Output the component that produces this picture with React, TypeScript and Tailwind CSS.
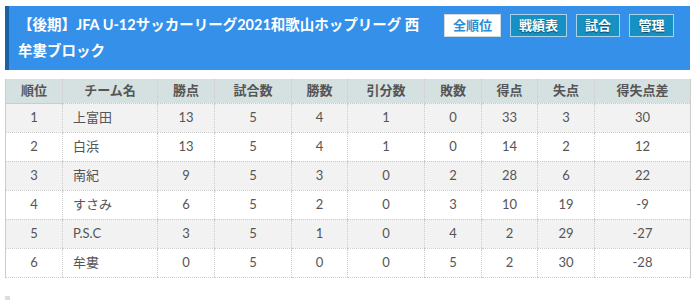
const rows = [
  { rank: 1, team: '上富田', pts: 13, played: 5, win: 4, draw: 1, lose: 0, gf: 33, ga: 3, diff: 30 },
  { rank: 2, team: '白浜', pts: 13, played: 5, win: 4, draw: 1, lose: 0, gf: 14, ga: 2, diff: 12 },
  { rank: 3, team: '南紀', pts: 9, played: 5, win: 3, draw: 0, lose: 2, gf: 28, ga: 6, diff: 22 },
  { rank: 4, team: 'すさみ', pts: 6, played: 5, win: 2, draw: 0, lose: 3, gf: 10, ga: 19, diff: -9 },
  { rank: 5, team: 'P.S.C', pts: 3, played: 5, win: 1, draw: 0, lose: 4, gf: 2, ga: 29, diff: -27 },
  { rank: 6, team: '牟婁', pts: 0, played: 5, win: 0, draw: 0, lose: 5, gf: 2, ga: 30, diff: -28 },
];

const headers = ['順位', 'チーム名', '勝点', '試合数', '勝数', '引分数', '敗数', '得点', '失点', '得失点差'];
const widths = [57, 95, 57, 77, 56, 77, 57, 56, 57, 96];

export default function App() {
  return (
    <div className="min-h-screen bg-white text-[#555] font-['Lato','Noto_Sans_CJK_JP',sans-serif]">
      <div className="ml-[5px] w-[685px] pt-[6px]">
        {/* title bar */}
        <div className="flex items-start h-[64px] bg-[#3590ea] border-l-4 border-[#1b5fa5] pl-[9px] pr-[16px] pt-[6px]">
          <h1 className="w-[404px] text-white font-bold text-[14.5px] leading-[26px]">
            【後期】JFA U-12サッカーリーグ2021和歌山ホップリーグ 西牟婁ブロック
          </h1>
          <div className="ml-auto flex gap-[9px] pt-[2px]">
            <button className="h-[23px] w-[57px] bg-white border border-[#cfd8dc] text-[#2a8ed2] text-[13px] font-bold">
              全順位
            </button>
            <button className="h-[23px] w-[57px] bg-[#1591c3] border border-[#a9d3ea] text-white text-[13px] font-bold [text-shadow:0_1px_1px_rgba(0,0,0,0.5)]">
              戦績表
            </button>
            <button className="h-[23px] w-[44px] bg-[#1591c3] border border-[#a9d3ea] text-white text-[13px] font-bold [text-shadow:0_1px_1px_rgba(0,0,0,0.5)]">
              試合
            </button>
            <button className="h-[23px] w-[45px] bg-[#1591c3] border border-[#a9d3ea] text-white text-[13px] font-bold [text-shadow:0_1px_1px_rgba(0,0,0,0.5)]">
              管理
            </button>
          </div>
        </div>

        {/* standings */}
        <table className="mt-[9px] w-[685px] table-fixed border-collapse border-x border-[#cccccc] text-[13px]">
          <colgroup>
            {widths.map((w, i) => (
              <col key={i} style={{ width: w }} />
            ))}
          </colgroup>
          <thead>
            <tr className="h-[24px] bg-[#d5e0e0]">
              {headers.map((h, i) => (
                <th
                  key={h}
                  className={`font-bold text-center text-[#555] border-b border-[#cccccc] ${i > 0 ? 'border-l border-dotted' : ''}`}
                >
                  {h}
                </th>
              ))}
            </tr>
          </thead>
          <tbody>
            {rows.map((r, idx) => (
              <tr key={r.rank} className={`h-[29px] ${idx % 2 === 0 ? 'bg-[#f2f2f2]' : 'bg-white'}`}>
                <td className="text-center border-b border-dotted border-[#cccccc]">{r.rank}</td>
                <td className="text-left pl-[10px] border-b border-l border-dotted border-[#cccccc]">{r.team}</td>
                <td className="text-center border-b border-l border-dotted border-[#cccccc]">{r.pts}</td>
                <td className="text-center border-b border-l border-dotted border-[#cccccc]">{r.played}</td>
                <td className="text-center border-b border-l border-dotted border-[#cccccc]">{r.win}</td>
                <td className="text-center border-b border-l border-dotted border-[#cccccc]">{r.draw}</td>
                <td className="text-center border-b border-l border-dotted border-[#cccccc]">{r.lose}</td>
                <td className="text-center border-b border-l border-dotted border-[#cccccc]">{r.gf}</td>
                <td className="text-center border-b border-l border-dotted border-[#cccccc]">{r.ga}</td>
                <td className="text-center border-b border-l border-dotted border-[#cccccc]">{r.diff}</td>
              </tr>
            ))}
          </tbody>
        </table>

        <div className="mt-[18px] w-[5px] h-[5px] bg-[#dddddd]" />
      </div>
    </div>
  );
}
